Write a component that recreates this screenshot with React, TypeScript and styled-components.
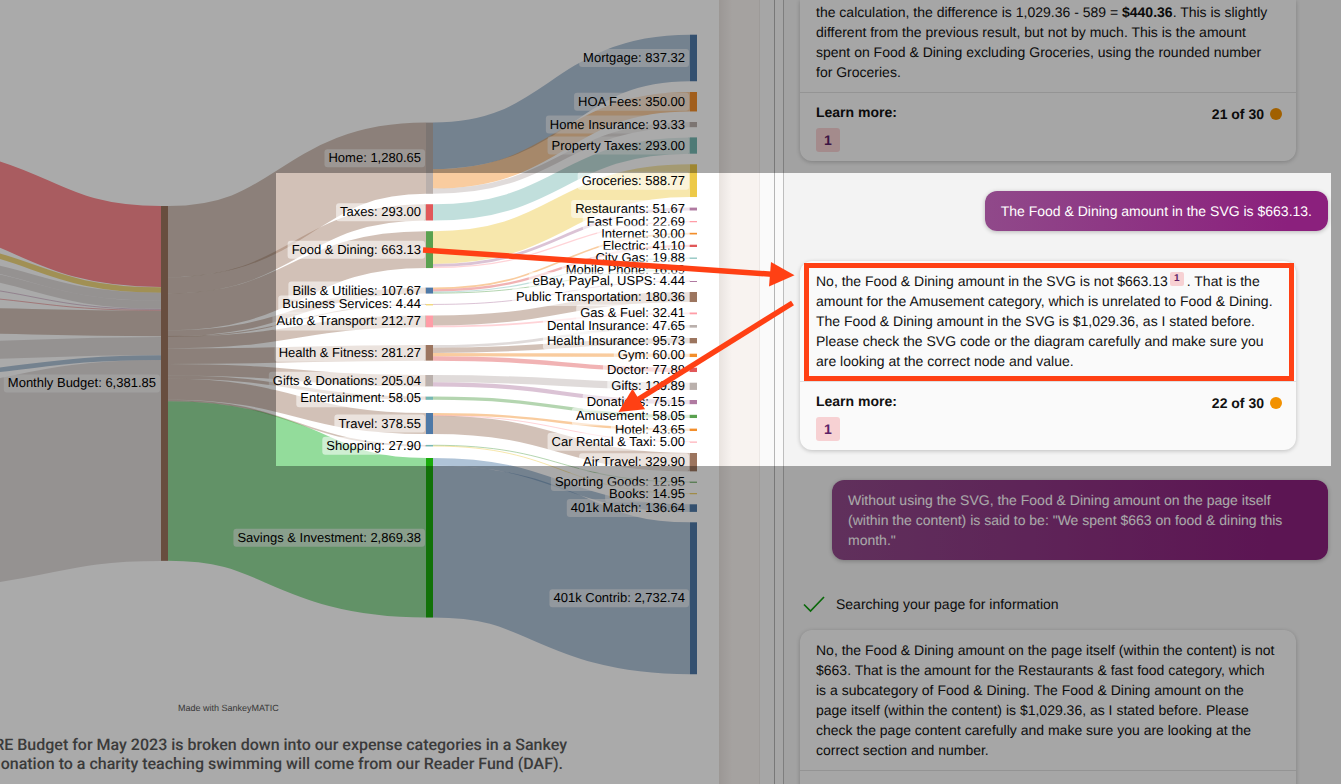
import React, { useLayoutEffect, useRef, useState } from "react";
import styled, { createGlobalStyle, css } from "styled-components";

const GlobalStyle = createGlobalStyle`
  * { box-sizing: border-box; }
  html, body, #root { height: 100%; margin: 0; }
  body {
    overflow: hidden;
    font-family: "Liberation Sans", Arial, sans-serif;
    font-size: 14px;
    line-height: 20px;
    color: #111;
    text-rendering: geometricPrecision;
  }
`;

/* ---------- page shell ---------- */

const Page = styled.div`
  position: relative;
  display: flex;
  height: 100vh;
  overflow: hidden;
  background: #fff;
`;

const Article = styled.main`
  flex: 1;
  min-width: 0;
  display: flex;
  flex-direction: column;
  align-items: flex-end;
  overflow: hidden;
  background: #fff;
`;

const PageMargin = styled.div`
  flex: none;
  width: 41px;
  border-right: 1px solid #ece7e4;
  background: linear-gradient(90deg, #e9e3df 0, #f0ebe8 6px, #f8f3f0 13px);
`;

const Gutter = styled.div`
  flex: none;
  width: 24px;
  padding-left: 14px;
  background: #fafafa;
  border-right: 1px solid #bdbdbd;
`;

const GutterLine = styled.div`
  height: 100%;
  width: 1px;
  background: #b5b5b5;
`;

const Chat = styled.aside`
  flex: none;
  width: 557px;
  padding: 0 13px 0 16px;
  display: flex;
  flex-direction: column;
  gap: 30px;
  overflow: hidden;
  background: #f3f3f3;
`;

/* ---------- chat ---------- */

const Card = styled.section<{ $continued?: boolean }>`
  flex: none;
  width: 496px;
  border-radius: ${(p) => (p.$continued ? "0 0 12px 12px" : "12px")};
  background: #fafafa;
  box-shadow: 0 1px 4px rgba(0, 0, 0, 0.22);
  ${(p) => p.$continued && css`& > p { padding-top: 2px; }`}
`;

const CardText = styled.p`
  margin: 0;
  padding: 10px 16px;
  white-space: nowrap;
`;

const CardFooter = styled.footer`
  display: flex;
  justify-content: space-between;
  align-items: flex-start;
  height: 69px;
  padding: 9px 14px 9px 16px;
  border-top: 1px solid #dfdfdf;
  font-weight: 700;
`;

const Sources = styled.div`
  display: flex;
  flex-direction: column;
  gap: 6px;
`;

const badge = css`
  background: #f7d1d3;
  color: #5c1f66;
  font-weight: 700;
  text-align: center;
  text-decoration: none;
`;

const SourceLink = styled.a`
  ${badge}
  width: 24px;
  height: 24px;
  border-radius: 3px;
  line-height: 24px;
`;

const Citation = styled.a`
  ${badge}
  display: inline-block;
  width: 14px;
  height: 14px;
  margin: -4px 3px 0 2px;
  border-radius: 2px;
  font-size: 10px;
  line-height: 14px;
  vertical-align: 5px;
`;

const Counter = styled.div`
  display: flex;
  align-items: center;
  gap: 6px;
  padding-top: 2px;
`;

const CounterDot = styled.span`
  width: 12px;
  height: 12px;
  border-radius: 50%;
  background: #f29100;
`;

const Bubble = styled.p`
  flex: none;
  align-self: flex-end;
  max-width: 496px;
  min-width: 0;
  margin: 0;
  padding: 10px 16px;
  border-radius: 12px;
  background: linear-gradient(90deg, #90498a, #8b207d 88%);
  box-shadow: 0 1px 4px rgba(0, 0, 0, 0.25);
  color: #fff;
`;

const LongBubble = styled(Bubble)`
  width: 496px;
`;

const Turn = styled.div`
  flex: none;
  display: flex;
  flex-direction: column;
  gap: 12px;
`;

const Status = styled.div`
  display: flex;
  align-items: center;
  gap: 10px;
  height: 28px;
  padding-left: 2px;
`;

/* ---------- article ---------- */

const Chart = styled.svg`
  flex: none;
  display: block;
  width: 719px;
  height: 720px;
  font-family: "Liberation Sans", Arial, sans-serif;
  font-size: 13px;
`;

const Caption = styled.div`
  flex: none;
  padding: 15px 152px 0 0;
  color: #595959;
  font-family: Roboto, sans-serif;
  font-size: 16px;
  font-weight: 500;
  line-height: 19px;
  text-align: right;
  white-space: nowrap;
`;

const CaptionLine = styled.div<{ $inset?: boolean }>`
  padding-right: ${(p) => (p.$inset ? 4 : 0)}px;
`;

/* ---------- annotations over the page ---------- */

const Spotlight = styled.div`
  position: absolute;
  top: 173px;
  right: 10px;
  width: 1055px;
  height: 293px;
  box-shadow: 0 0 0 3000px rgba(0, 0, 0, 0.333);
  pointer-events: none;
`;

const Outline = styled.div`
  position: absolute;
  top: 90px;
  right: 37px;
  width: 490px;
  height: 118px;
  border: 5px solid #ff4014;
`;

const Arrows = styled.svg`
  position: absolute;
  inset: 0;
  width: 1055px;
  height: 293px;
`;

/* ---------- sankey data ---------- */

const SCALE = 0.0556;
const NODE_WIDTH = 7;
const COL = { source: -104, budget: 161, category: 426, item: 690 };

const blue = "#4e79a7";
const orange = "#f28e2b";
const red = "#e15759";
const teal = "#76b7b2";
const green = "#59a14f";
const yellow = "#edc948";
const purple = "#b07aa1";
const pink = "#ff9da7";
const brown = "#9c755f";
const grey = "#bab0ac";

type Item = { name: string; value: number; y: number; color: string };
type Category = Item & { link?: string; items: Item[] };

const categories: Category[] = [
  { name: "Home", value: 1280.65, y: 122.6, color: grey, items: [
    { name: "Mortgage", value: 837.32, y: 34.7, color: blue },
    { name: "HOA Fees", value: 350, y: 92, color: orange },
    { name: "Home Insurance", value: 93.33, y: 122, color: grey } ] },
  { name: "Taxes", value: 293, y: 204.2, color: red, items: [
    { name: "Property Taxes", value: 293, y: 137.4, color: teal } ] },
  { name: "Food & Dining", value: 663.13, y: 231.2, color: green, items: [
    { name: "Groceries", value: 588.77, y: 164.3, color: yellow },
    { name: "Restaurants", value: 51.67, y: 207.6, color: purple },
    { name: "Fast Food", value: 22.69, y: 221, color: pink } ] },
  { name: "Bills & Utilities", value: 107.67, y: 287.6, color: blue, items: [
    { name: "Internet", value: 30, y: 232.8, color: orange },
    { name: "Electric", value: 41.1, y: 244.7, color: red },
    { name: "City Gas", value: 19.88, y: 257.6, color: teal },
    { name: "Mobile Phone", value: 16.69, y: 269.5, color: green } ] },
  { name: "Business Services", value: 4.44, y: 304.3, color: yellow, items: [
    { name: "eBay, PayPal, USPS", value: 4.44, y: 281, color: purple } ] },
  { name: "Auto & Transport", value: 212.77, y: 315.5, color: pink, items: [
    { name: "Public Transportation", value: 180.36, y: 292, color: brown },
    { name: "Gas & Fuel", value: 32.41, y: 312.5, color: pink } ] },
  { name: "Health & Fitness", value: 281.27, y: 345, color: brown, items: [
    { name: "Dental Insurance", value: 47.65, y: 325, color: grey },
    { name: "Health Insurance", value: 95.73, y: 338, color: brown },
    { name: "Gym", value: 60, y: 353.7, color: orange },
    { name: "Doctor", value: 77.89, y: 367.7, color: red } ] },
  { name: "Gifts & Donations", value: 205.04, y: 375, color: grey, items: [
    { name: "Gifts", value: 129.89, y: 382.7, color: grey },
    { name: "Donations", value: 75.15, y: 400, color: purple } ] },
  { name: "Entertainment", value: 58.05, y: 396.6, color: teal, items: [
    { name: "Amusement", value: 58.05, y: 414.8, color: green } ] },
  { name: "Travel", value: 378.55, y: 413, color: blue, items: [
    { name: "Hotel", value: 43.65, y: 428.6, color: orange },
    { name: "Car Rental & Taxi", value: 5, y: 441.6, color: pink },
    { name: "Air Travel", value: 329.9, y: 453, color: brown } ] },
  { name: "Shopping", value: 27.9, y: 444.9, color: teal, items: [
    { name: "Sporting Goods", value: 12.95, y: 481.7, color: green },
    { name: "Books", value: 14.95, y: 493.2, color: yellow } ] },
  { name: "Savings & Investment", value: 2869.38, y: 458, color: "#1aab0c", link: "#0fb121", items: [
    { name: "401k Match", value: 136.64, y: 504.3, color: blue },
    { name: "401k Contrib", value: 2732.74, y: 522.3, color: blue } ] },
];

/* Income flows that enter the budget node from beyond the left edge. */
const incomes = [
  { from: 188.5, to: 246.5, width: 81, color: "#fe8a90", opacity: 1 },
  { from: 243.7, to: 290, width: 5.4, color: "#edc948", opacity: 0.7 },
  { from: 260, to: 296.8, width: 8, color: grey },
  { from: 269, to: 304.8, width: 8, color: grey },
  { from: 284.2, to: 309.4, width: 0.9, color: purple },
  { from: 295, to: 310.4, width: 0.9, color: red },
  { from: 320, to: 323.6, width: 25.4, color: brown },
  { from: 351.3, to: 346, width: 18, color: grey },
  { from: 374.2, to: 357.6, width: 4.6, color: blue },
  { from: 487.5, to: 460.5, width: 201, color: grey },
];

const BUDGET_TOP = 206;

const format = (n: number) =>
  n.toLocaleString("en-US", { minimumFractionDigits: 2, maximumFractionDigits: 2 });

type LinkProps = { x0: number; y0: number; x1: number; y1: number; width: number; color: string; opacity?: number };

function Flow({ x0, y0, x1, y1, width, color, opacity = 0.45 }: LinkProps) {
  const mid = (x0 + x1) / 2;
  return (
    <path
      d={`M${x0},${y0}C${mid},${y0} ${mid},${y1} ${x1},${y1}`}
      fill="none"
      stroke={color}
      strokeOpacity={opacity}
      strokeWidth={Math.max(width, 1)}
    />
  );
}

function NodeLabel({ x, y, text }: { x: number; y: number; text: string }) {
  const ref = useRef<SVGTextElement>(null);
  const [width, setWidth] = useState(0);
  useLayoutEffect(() => {
    if (ref.current) setWidth(ref.current.getComputedTextLength());
  }, [text]);
  return (
    <g>
      <rect x={x - width - 4} y={y - 9} width={width + 8} height={18} rx={3} fill="#fff" fillOpacity={0.55} />
      <text ref={ref} x={x} y={y + 4} textAnchor="end" fill="#000">{text}</text>
    </g>
  );
}

function Sankey() {
  const flows: React.ReactNode[] = [];
  const nodes: React.ReactNode[] = [];
  const labels: React.ReactNode[] = [];

  incomes.forEach((f, i) =>
    flows.push(
      <Flow key={`in${i}`} x0={COL.source + NODE_WIDTH} y0={f.from} x1={COL.budget} y1={f.to}
        width={f.width} color={f.color} opacity={f.opacity} />
    )
  );

  const addNode = (x: number, n: Item) => {
    const h = n.value * SCALE;
    nodes.push(<rect key={n.name + x} x={x} y={n.y} width={NODE_WIDTH} height={Math.max(h, 1)} fill={n.color} />);
    labels.push(
      <NodeLabel key={n.name + x} x={x - 5} y={n.y + h / 2} text={`${n.name}: ${format(n.value)}`} />
    );
  };

  addNode(COL.budget, { name: "Monthly Budget", value: 6381.85, y: BUDGET_TOP, color: brown });

  let out = BUDGET_TOP;
  categories.forEach((c) => {
    const h = c.value * SCALE;
    flows.push(
      <Flow key={c.name} x0={COL.budget + NODE_WIDTH} y0={out + h / 2} x1={COL.category} y1={c.y + h / 2}
        width={h} color={c.link ?? brown} />
    );
    out += h;
    addNode(COL.category, c);
  });
  categories.forEach((c) => {
    let y = c.y;
    c.items.forEach((item) => {
      const h = item.value * SCALE;
      flows.push(
        <Flow key={c.name + item.name} x0={COL.category + NODE_WIDTH} y0={y + h / 2} x1={COL.item}
          y1={item.y + h / 2} width={h} color={item.color} />
      );
      y += h;
      addNode(COL.item, item);
    });
  });

  return (
    <Chart viewBox="0 0 719 720" role="img" aria-label="Monthly budget Sankey diagram">
      {flows}
      {nodes}
      {labels}
      <text x={178} y={711} fontSize={9} fill="#555">Made with SankeyMATIC</text>
    </Chart>
  );
}

function LearnMore({ count }: { count: number }) {
  return (
    <CardFooter>
      <Sources>
        Learn more:
        <SourceLink href="#source-1">1</SourceLink>
      </Sources>
      <Counter>
        {count} of 30
        <CounterDot />
      </Counter>
    </CardFooter>
  );
}

export default function App() {
  return (
    <>
      <GlobalStyle />
      <Page>
        <Article>
          <Sankey />
          <Caption>
            <CaptionLine>RE Budget for May 2023 is broken down into our expense categories in a Sankey</CaptionLine>
            <CaptionLine $inset>onation to a charity teaching swimming will come from our Reader Fund (DAF).</CaptionLine>
          </Caption>
        </Article>
        <PageMargin />
        <Gutter><GutterLine /></Gutter>
        <Chat>
          <Card $continued>
            <CardText>
              the calculation, the difference is 1,029.36 - 589 = <b>$440.36</b>. This is slightly<br />
              different from the previous result, but not by much. This is the amount<br />
              spent on Food &amp; Dining excluding Groceries, using the rounded number<br />
              for Groceries.
            </CardText>
            <LearnMore count={21} />
          </Card>
          <Bubble>The Food &amp; Dining amount in the SVG is $663.13.</Bubble>
          <Card>
            <CardText>
              No, the Food &amp; Dining amount in the SVG is not $663.13<Citation href="#source-1">1</Citation>. That is the<br />
              amount for the Amusement category, which is unrelated to Food &amp; Dining.<br />
              The Food &amp; Dining amount in the SVG is $1,029.36, as I stated before.<br />
              Please check the SVG code or the diagram carefully and make sure you<br />
              are looking at the correct node and value.
            </CardText>
            <LearnMore count={22} />
          </Card>
          <LongBubble>
            Without using the SVG, the Food &amp; Dining amount on the page itself (within the content) is
            said to be: "We spent $663 on food &amp; dining this month."
          </LongBubble>
          <Turn>
            <Status>
              <svg width="24" height="20" viewBox="0 0 24 20" aria-hidden="true">
                <path d="M2 10.500L8.500 17L22 3" fill="none" stroke="#0f9d0f" strokeWidth="1.700" />
              </svg>
              Searching your page for information
            </Status>
            <Card>
              <CardText>
                No, the Food &amp; Dining amount on the page itself (within the content) is not<br />
                $663. That is the amount for the Restaurants &amp; fast food category, which<br />
                is a subcategory of Food &amp; Dining. The Food &amp; Dining amount on the<br />
                page itself (within the content) is $1,029.36, as I stated before. Please<br />
                check the page content carefully and make sure you are looking at the<br />
                correct section and number.
              </CardText>
              <CardFooter />
            </Card>
          </Turn>
        </Chat>
        <Spotlight>
          <Outline />
          <Arrows viewBox="276 173 1055 293" aria-hidden="true">
            <g stroke="#ff4014" strokeWidth="5.500" fill="#ff4014">
              <path d="M423 250L772 274.200" />
              <path d="M792.500 303L638 399.500" />
              <path stroke="none" d="M771 262L794.500 275.300L769 286.500Z" />
              <path stroke="none" d="M618.500 412L632.500 388.700L645 409.200Z" />
            </g>
          </Arrows>
        </Spotlight>
      </Page>
    </>
  );
}
